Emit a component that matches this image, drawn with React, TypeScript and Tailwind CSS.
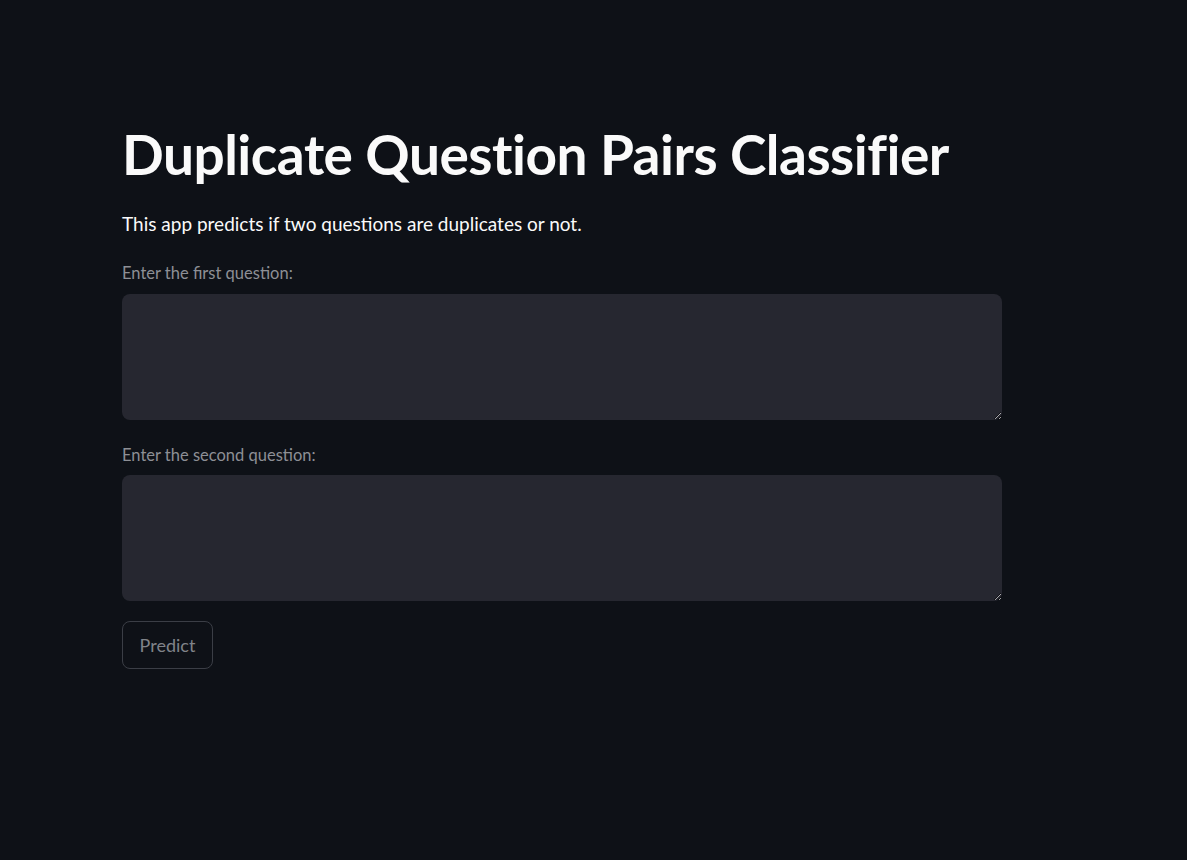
export default function App() {
  return (
    <div className="min-h-screen w-full bg-[#0e1117] text-[#fafafa]" style={{ fontFamily: 'Lato, "Noto Sans", sans-serif' }}>
      <main className="w-[880px] ml-[122px] pt-[121px]">
        <h1 className="text-[55px] font-bold leading-[66px] tracking-[-0.5px]">Duplicate Question Pairs Classifier</h1>
        <p className="mt-[23px] text-[19px] leading-[28px]">This app predicts if two questions are duplicates or not.</p>

        <div className="mt-[24px]">
          <label className="block text-[16.5px] leading-[22px] text-[#8d8f95]">Enter the first question:</label>
          <textarea className="mt-[10px] block w-full h-[126px] rounded-lg bg-[#262730] outline-none resize-y p-3 text-[#fafafa]" />
        </div>

        <div className="mt-[24px]">
          <label className="block text-[16.5px] leading-[22px] text-[#8d8f95]">Enter the second question:</label>
          <textarea className="mt-[9px] block w-full h-[126px] rounded-lg bg-[#262730] outline-none resize-y p-3 text-[#fafafa]" />
        </div>

        <button className="mt-[20px] h-[48px] w-[91px] rounded-lg border border-[#3b3e46] text-[18px] text-[#808389]">Predict</button>
      </main>
    </div>
  )
}
